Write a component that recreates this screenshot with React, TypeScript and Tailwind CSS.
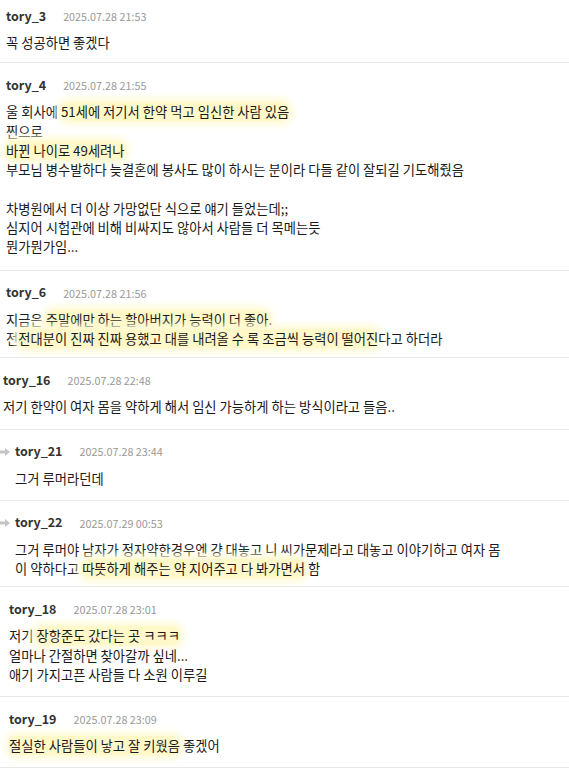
import React from "react";

const Hl = ({ children }: { children: React.ReactNode }) => (
  <span className="bg-[#fff8c8] shadow-[0_0_7px_4px_#fffad6] rounded-[8px]">{children}</span>
);

const Arrow = () => (
  <svg width="10" height="8" viewBox="0 0 10 8" className="mr-[5px] shrink-0">
    <path d="M0 2.5 H5 V0 L10 4 L5 8 V5.5 H0 Z" fill="#c4c4c4" />
  </svg>
);

type Props = {
  name: string;
  date: string;
  lines: React.ReactNode[];
  box: string;
  reply?: boolean;
};

const Comment = ({ name, date, lines, box, reply }: Props) => (
  <div className={box}>
    <div className="flex items-center h-[18px]">
      {reply && <Arrow />}
      <span className="text-[12.5px] font-bold text-[#333]">{name}</span>
      <span className="ml-[17px] text-[10.8px] text-[#999]">{date}</span>
    </div>
    <div className={reply ? "mt-[8px] pl-[15px] text-[13.3px] leading-[19.3px] text-[#1a1a1a]" : "mt-[8px] text-[13.3px] leading-[19.3px] text-[#1a1a1a]"}>
      {lines.map((l, i) => (
        <div key={i} className="h-[19.3px] whitespace-nowrap">
          {l}
        </div>
      ))}
    </div>
  </div>
);

export default function App() {
  return (
    <div
      className="w-[569px] h-[770px] overflow-hidden bg-white"
      style={{ fontFamily: '"Noto Sans CJK KR", "Noto Sans", sans-serif' }}
    >
      <Comment
        box="pt-[7px] pb-[10px] pl-[6px] border-b border-[#e8e8e8]"
        name="tory_3"
        date="2025.07.28 21:53"
        lines={["꼭 성공하면 좋겠다"]}
      />
      <Comment
        box="pt-[13px] pb-[13px] pl-[6px] border-b border-[#e8e8e8]"
        name="tory_4"
        date="2025.07.28 21:55"
        lines={[
          <>
            울 회사에 <Hl>51세에 저기서 한약 먹고 임신한 사람 있음</Hl>
          </>,
          "찐으로",
          <Hl>바뀐 나이로 49세려나</Hl>,
          "부모님 병수발하다 늦결혼에 봉사도 많이 하시는 분이라 다들 같이 잘되길 기도해줬음",
          "",
          "차병원에서 더 이상 가망없단 식으로 얘기 들었는데;;",
          "심지어 시험관에 비해 비싸지도 않아서 사람들 더 목메는듯",
          "뭔가뭔가임...",
        ]}
      />
      <Comment
        box="pt-[13px] pb-[9px] pl-[6px] border-b border-[#e8e8e8]"
        name="tory_6"
        date="2025.07.28 21:56"
        lines={[
          <>
            지금은 <Hl>주말에만 하는 할아버지가 능력이 더 좋아</Hl>.
          </>,
          <>
            전<Hl>전대분이 진짜 진짜 용했고 대를 내려올 수 록 조금씩 능력이 떨어진</Hl>다고 하더라
          </>,
        ]}
      />
      <Comment
        box="pt-[13px] pb-[12px] pl-[3px] border-b border-[#e8e8e8]"
        name="tory_16"
        date="2025.07.28 22:48"
        lines={["저기 한약이 여자 몸을 약하게 해서 임신 가능하게 하는 방식이라고 들음.."]}
      />
      <Comment
        box="pt-[13px] pb-[12px] pl-0 border-b border-[#e8e8e8]"
        reply
        name="tory_21"
        date="2025.07.28 23:44"
        lines={["그거 루머라던데"]}
      />
      <Comment
        box="pt-[13px] pb-[8px] pl-0 border-b border-[#e8e8e8]"
        reply
        name="tory_22"
        date="2025.07.29 00:53"
        lines={[
          "그거 루머야 남자가 정자약한경우엔 걍 대놓고 니 씨가문제라고 대놓고 이야기하고 여자 몸",
          <>
            이 약하다고 <Hl>따뜻하게 해주는 약 지어주고 다 봐가면서</Hl> 함
          </>,
        ]}
      />
      <Comment
        box="pt-[13px] pb-[12px] pl-[9px] border-b border-[#e8e8e8]"
        name="tory_18"
        date="2025.07.28 23:01"
        lines={[
          <>
            저기 <Hl>장항준도 갔다는 곳 ㅋㅋㅋ</Hl>
          </>,
          "얼마나 간절하면 찾아갈까 싶네...",
          "애기 가지고픈 사람들 다 소원 이루길",
        ]}
      />
      <Comment
        box="pt-[13px] pb-[11px] pl-[9px] border-b border-[#e8e8e8]"
        name="tory_19"
        date="2025.07.28 23:09"
        lines={[
          <>
            <Hl>절실한 사람들이 낳고 잘 키웠음</Hl> 좋겠어
          </>,
        ]}
      />
    </div>
  );
}
